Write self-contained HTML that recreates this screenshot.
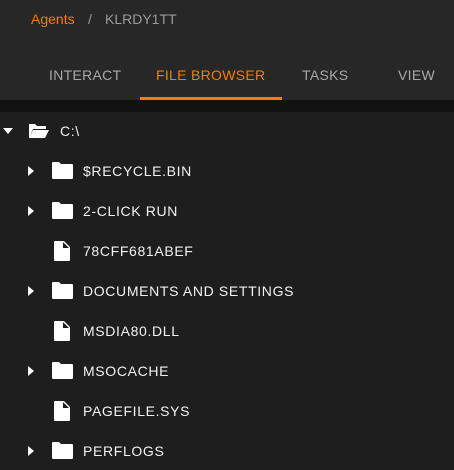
<!DOCTYPE html>
<html><head><style>
*{margin:0;padding:0;box-sizing:border-box}
body{width:454px;height:470px;overflow:hidden;background:#1e1e1e;font-family:"Liberation Sans",sans-serif;position:relative}
.hdr{position:absolute;left:0;top:0;width:454px;height:100px;background:#272727}
.crumb{position:absolute;top:11px;left:31px;font-size:14px;color:#9a9a9a;white-space:pre}
.crumb .a{color:#f57c00}
.tab{position:absolute;top:67px;font-size:14px;letter-spacing:0.3px;color:#a8a8a8}
.ul{position:absolute;left:140px;top:97px;width:142px;height:3px;background:#f57c00}
.strip{position:absolute;left:0;top:100px;width:454px;height:12px;background:#121212}
.row{position:absolute;left:0;height:20px;width:454px;color:#f2f2f2;font-size:14px;letter-spacing:0.65px}
.row span{position:absolute;top:2px}
svg{position:absolute}
</style></head><body>
<div class="hdr">
<div class="crumb"><span class="a">Agents</span><span style="position:absolute;left:57px">/</span><span style="position:absolute;left:74px">KLRDY1TT</span></div>
<div class="tab" style="left:49px">INTERACT</div>
<div class="tab" style="left:156px;color:#f57c00">FILE BROWSER</div>
<div class="tab" style="left:302px">TASKS</div>
<div class="tab" style="left:398px">VIEW</div>
<div class="ul"></div>
</div>
<div class="strip"></div>

<div class="row" style="top:121px">
<svg style="left:2px;top:7px" width="12" height="7"><path d="M1 0h10L6 6z" fill="#fff"/></svg>
<svg style="left:28px;top:2px" width="22" height="16"><path d="M1 1h6l2 2h9v3H5L1 15z M5 7h16l-4 8H1z" fill="#fff"/></svg>
<span style="left:60px">C:\</span></div>

<div class="row" style="top:161px"><svg style="left:28px;top:5px" width="7" height="10"><path d="M0 0l6 5-6 5z" fill="#fff"/></svg><svg style="left:52px;top:1px" width="21" height="17"><path d="M0 1a1 1 0 0 1 1-1h6l2 2h11a1 1 0 0 1 1 1v13a1 1 0 0 1-1 1H1a1 1 0 0 1-1-1z" fill="#fff"/></svg><span style="left:83px">$RECYCLE.BIN</span></div>

<div class="row" style="top:201px"><svg style="left:28px;top:5px" width="7" height="10"><path d="M0 0l6 5-6 5z" fill="#fff"/></svg><svg style="left:52px;top:1px" width="21" height="17"><path d="M0 1a1 1 0 0 1 1-1h6l2 2h11a1 1 0 0 1 1 1v13a1 1 0 0 1-1 1H1a1 1 0 0 1-1-1z" fill="#fff"/></svg><span style="left:83px">2-CLICK RUN</span></div>

<div class="row" style="top:241px"><svg style="left:54px;top:0" width="16" height="20"><path d="M1 0h9l6 6v13a1 1 0 0 1-1 1H1a1 1 0 0 1-1-1V1a1 1 0 0 1 1-1z M9 1v6h6z" fill="#fff" fill-rule="evenodd"/></svg><span style="left:83px">78CFF681ABEF</span></div>

<div class="row" style="top:281px"><svg style="left:28px;top:5px" width="7" height="10"><path d="M0 0l6 5-6 5z" fill="#fff"/></svg><svg style="left:52px;top:1px" width="21" height="17"><path d="M0 1a1 1 0 0 1 1-1h6l2 2h11a1 1 0 0 1 1 1v13a1 1 0 0 1-1 1H1a1 1 0 0 1-1-1z" fill="#fff"/></svg><span style="left:83px">DOCUMENTS AND SETTINGS</span></div>

<div class="row" style="top:321px"><svg style="left:54px;top:0" width="16" height="20"><path d="M1 0h9l6 6v13a1 1 0 0 1-1 1H1a1 1 0 0 1-1-1V1a1 1 0 0 1 1-1z M9 1v6h6z" fill="#fff" fill-rule="evenodd"/></svg><span style="left:83px">MSDIA80.DLL</span></div>

<div class="row" style="top:361px"><svg style="left:28px;top:5px" width="7" height="10"><path d="M0 0l6 5-6 5z" fill="#fff"/></svg><svg style="left:52px;top:1px" width="21" height="17"><path d="M0 1a1 1 0 0 1 1-1h6l2 2h11a1 1 0 0 1 1 1v13a1 1 0 0 1-1 1H1a1 1 0 0 1-1-1z" fill="#fff"/></svg><span style="left:83px">MSOCACHE</span></div>

<div class="row" style="top:401px"><svg style="left:54px;top:0" width="16" height="20"><path d="M1 0h9l6 6v13a1 1 0 0 1-1 1H1a1 1 0 0 1-1-1V1a1 1 0 0 1 1-1z M9 1v6h6z" fill="#fff" fill-rule="evenodd"/></svg><span style="left:83px">PAGEFILE.SYS</span></div>

<div class="row" style="top:441px"><svg style="left:28px;top:5px" width="7" height="10"><path d="M0 0l6 5-6 5z" fill="#fff"/></svg><svg style="left:52px;top:1px" width="21" height="17"><path d="M0 1a1 1 0 0 1 1-1h6l2 2h11a1 1 0 0 1 1 1v13a1 1 0 0 1-1 1H1a1 1 0 0 1-1-1z" fill="#fff"/></svg><span style="left:83px">PERFLOGS</span></div>
</body></html>
